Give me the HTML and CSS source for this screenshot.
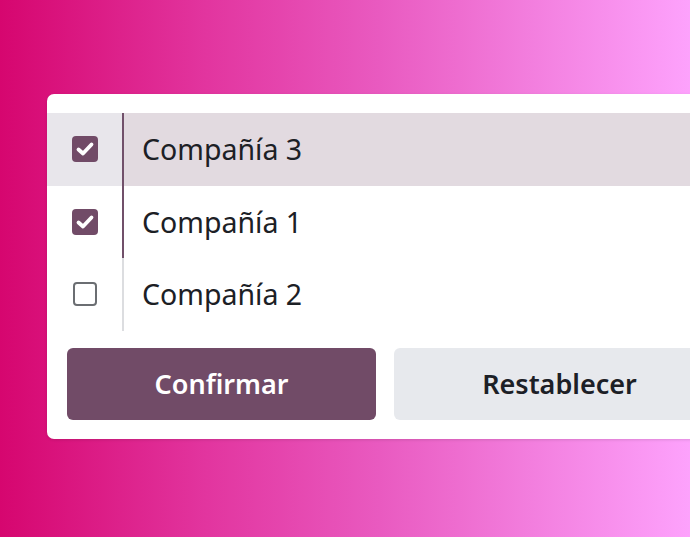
FILE: index.html
```html
<!DOCTYPE html>
<html lang="es">
<head>
<meta charset="utf-8">
<link rel="stylesheet" href="styles.css">
</head>
<body>
<div class="stage">
  <div class="card">
    <div class="list">
      <div class="row active">
        <div class="check-cell">
          <span class="box checked">
            <svg viewBox="0 0 26 26" width="26" height="26"><path d="M6.5 13.5 L11 17.5 L19.5 8.5" fill="none" stroke="#fff" stroke-width="3.8" stroke-linecap="round" stroke-linejoin="round"/></svg>
          </span>
        </div>
        <div class="label sel">Compañía 3</div>
      </div>
      <div class="row">
        <div class="check-cell">
          <span class="box checked">
            <svg viewBox="0 0 26 26" width="26" height="26"><path d="M6.5 13.5 L11 17.5 L19.5 8.5" fill="none" stroke="#fff" stroke-width="3.8" stroke-linecap="round" stroke-linejoin="round"/></svg>
          </span>
        </div>
        <div class="label sel">Compañía 1</div>
      </div>
      <div class="row">
        <div class="check-cell">
          <span class="box empty"></span>
        </div>
        <div class="label">Compañía 2</div>
      </div>
    </div>
    <div class="actions">
      <button class="btn primary">Confirmar</button>
      <button class="btn secondary">Restablecer</button>
    </div>
  </div>
</div>
</body>
</html>
```

FILE: styles.css
```css
html, body {
  margin: 0;
  padding: 0;
}
body {
  font-family: "Noto Sans", "Open Sans", sans-serif;
  overflow: hidden;
}
.stage {
  width: 690px;
  height: 537px;
  box-sizing: border-box;
  overflow: hidden;
  padding: 94px 0 0 47px;
  background: linear-gradient(90deg, #d6066f 0%, #e2359f 30%, #e95ac0 55%, #f483e2 80%, #fda2fc 100%);
}
.card {
  width: 720px;
  background: #ffffff;
  border-radius: 7px;
  padding: 19px 0 19px;
  box-shadow: 0 1px 3px rgba(0, 0, 0, 0.12);
}
.list {
  display: flex;
  flex-direction: column;
}
.row {
  display: grid;
  grid-template-columns: 75px 1fr;
  height: 72.5px;
}
.row.active .check-cell {
  background: #e8e6eb;
}
.row.active .label {
  background: #e2dae0;
}
.check-cell {
  display: flex;
  align-items: center;
  justify-content: center;
}
.box {
  width: 26px;
  height: 26px;
  box-sizing: border-box;
  border-radius: 4px;
  display: flex;
}
.box.checked {
  background: #714b67;
}
.box.empty {
  width: 24px;
  height: 24px;
  border: 2px solid #6b6e72;
}
.label {
  display: flex;
  align-items: center;
  border-left: 2px solid #dcdde0;
  padding-left: 18px;
  font-size: 28.5px;
  color: #1c2025;
}
.label.sel {
  border-left-color: #71506a;
}
.actions {
  display: flex;
  gap: 18px;
  padding: 17px 20px 0;
}
.btn {
  height: 72px;
  border: none;
  border-radius: 6px;
  font-family: "Noto Sans", "Open Sans", sans-serif;
  font-size: 27px;
  font-weight: 600;
}
.btn.primary {
  flex: 0 0 309px;
  background: #714b67;
  color: #ffffff;
}
.btn.secondary {
  flex: 0 0 331px;
  background: #e7e9ed;
  color: #1c2026;
}
```
